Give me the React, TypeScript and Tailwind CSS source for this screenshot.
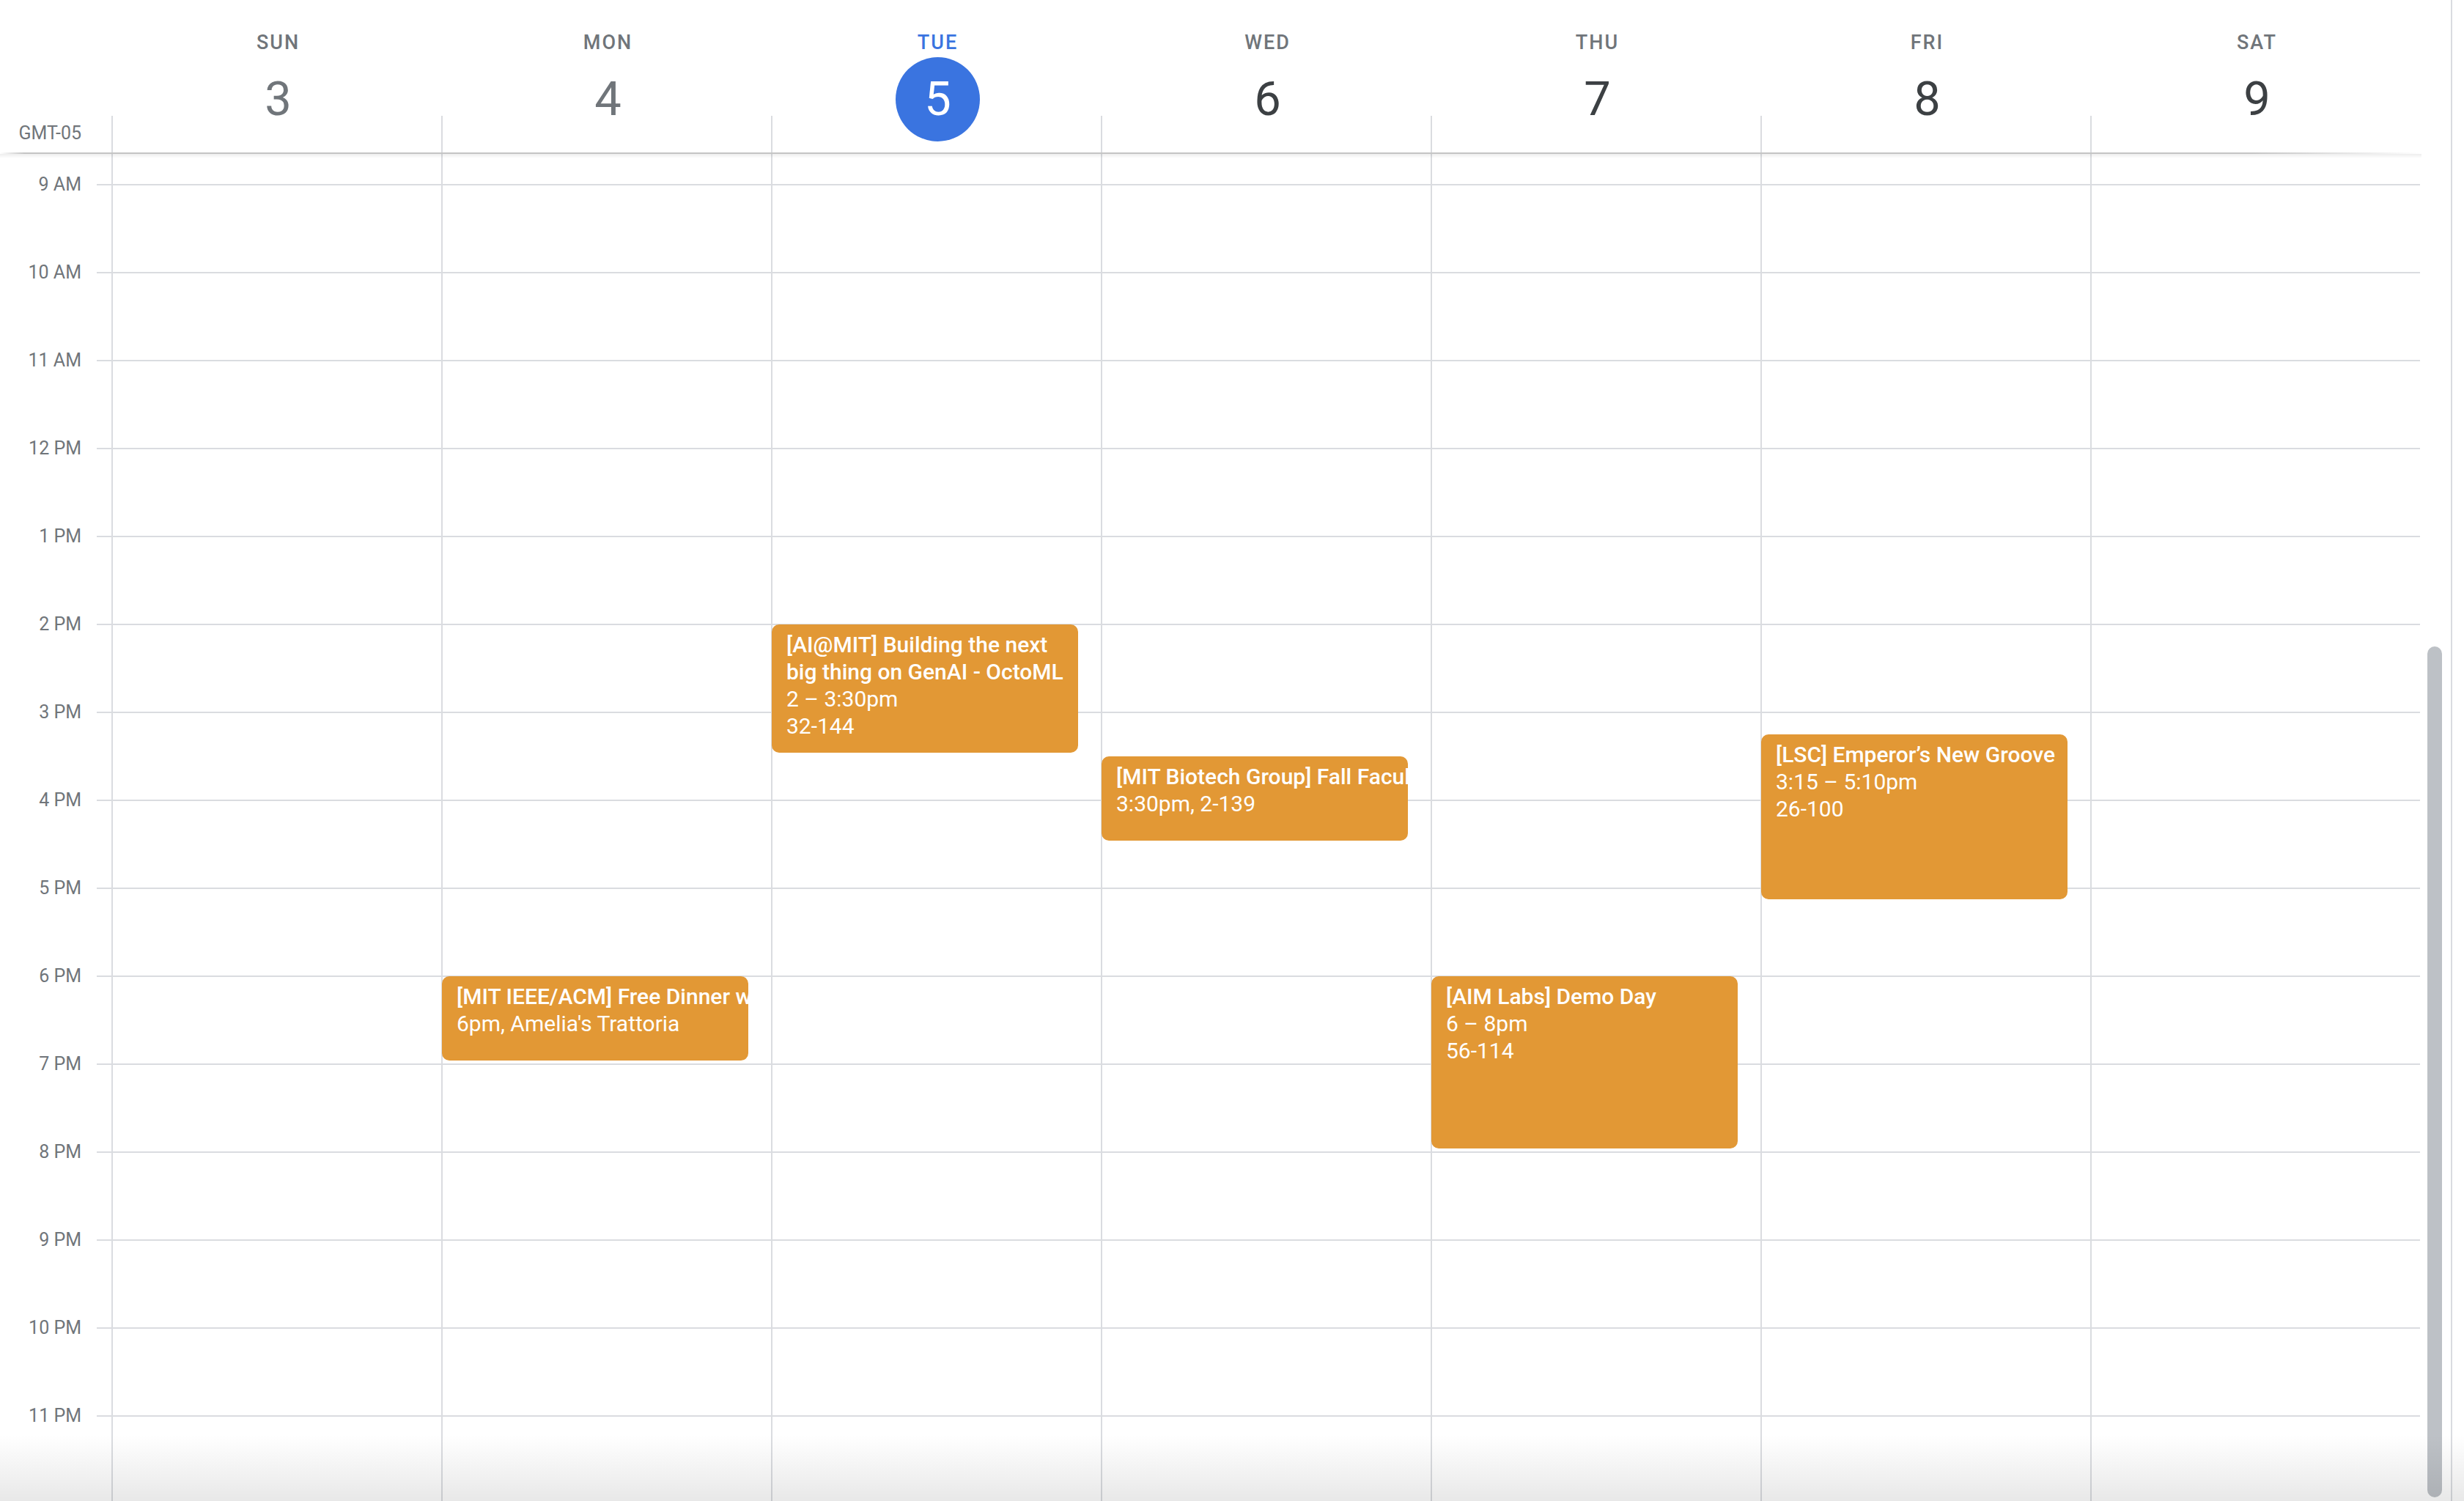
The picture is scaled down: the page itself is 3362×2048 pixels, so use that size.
import React from "react";

type Ev = {
  pos: string;
  title: string;
  lines: string[];
  wrap?: boolean;
};

const days: { name: string; num: string; past?: boolean; today?: boolean; events: Ev[] }[] = [
  { name: "SUN", num: "3", past: true, events: [] },
  {
    name: "MON",
    num: "4",
    past: true,
    events: [
      {
        pos: "top-[1122px] h-[115px]",
        title: "[MIT IEEE/ACM] Free Dinner with Jane Street",
        lines: ["6pm, Amelia's Trattoria"],
      },
    ],
  },
  {
    name: "TUE",
    num: "5",
    today: true,
    events: [
      {
        pos: "top-[642px] h-[175px]",
        title: "[AI@MIT] Building the next big thing on GenAI - OctoML",
        lines: ["2 – 3:30pm", "32-144"],
        wrap: true,
      },
    ],
  },
  {
    name: "WED",
    num: "6",
    events: [
      {
        pos: "top-[822px] h-[115px]",
        title: "[MIT Biotech Group] Fall Faculty Mixer",
        lines: ["3:30pm, 2-139"],
      },
    ],
  },
  {
    name: "THU",
    num: "7",
    events: [
      {
        pos: "top-[1122px] h-[235px]",
        title: "[AIM Labs] Demo Day",
        lines: ["6 – 8pm", "56-114"],
        wrap: true,
      },
    ],
  },
  {
    name: "FRI",
    num: "8",
    events: [
      {
        pos: "top-[792px] h-[225px]",
        title: "[LSC] Emperor’s New Groove",
        lines: ["3:15 – 5:10pm", "26-100"],
        wrap: true,
      },
    ],
  },
  { name: "SAT", num: "9", events: [] },
];

const hours = [
  "9 AM",
  "10 AM",
  "11 AM",
  "12 PM",
  "1 PM",
  "2 PM",
  "3 PM",
  "4 PM",
  "5 PM",
  "6 PM",
  "7 PM",
  "8 PM",
  "9 PM",
  "10 PM",
  "11 PM",
];

function EventBox({ ev }: { ev: Ev }) {
  return (
    <div
      className={`absolute left-[-1px] w-[418px] overflow-hidden rounded-[10px] bg-[#e29835] pl-[20px] pr-[6px] pt-[9px] text-[30px] leading-[37px] text-white ${ev.pos}`}
    >
      <div className={`font-medium ${ev.wrap ? "" : "whitespace-nowrap"}`}>{ev.title}</div>
      {ev.lines.map((l) => (
        <div key={l} className="whitespace-nowrap font-normal">
          {l}
        </div>
      ))}
    </div>
  );
}

export default function App() {
  return (
    <div className="relative flex h-[2048px] w-[3362px] overflow-hidden bg-white font-['Roboto','Liberation_Sans',sans-serif] text-[#3c4043]">
      {/* main calendar area */}
      <div className="flex w-[3344px] shrink-0 flex-col">
        {/* header */}
        <div className="flex h-[208px] w-[3304px] shrink-0">
          <div className="flex w-[152px] shrink-0 items-end justify-end pb-[11px] pr-[41px]">
            <span className="text-[25px] leading-[30px] text-[#70757a]">GMT-05</span>
          </div>
          {days.map((d) => (
            <div key={d.name} className="flex w-[450px] shrink-0 flex-col">
              <div className="flex h-[158px] flex-col items-center pl-[5px] pt-[42px]">
                <span
                  className={`text-[27px] font-medium leading-[32px] tracking-[2px] ${
                    d.today ? "text-[#3a74e0]" : "text-[#70757a]"
                  }`}
                >
                  {d.name}
                </span>
                <div
                  className={`mt-[4px] flex h-[115px] w-[115px] shrink-0 items-center justify-center rounded-full text-[65px] leading-none ${
                    d.today
                      ? "bg-[#3a74e0] text-white"
                      : d.past
                      ? "text-[#70757a]"
                      : "text-[#3c4043]"
                  }`}
                >
                  {d.num}
                </div>
              </div>
              <div className="h-[50px] border-l-2 border-[#dadce0]" />
            </div>
          ))}
        </div>

        {/* header bottom line with shadow */}
        <div className="relative z-10 h-[2px] w-[3304px] shrink-0 bg-[linear-gradient(to_right,rgba(190,190,190,0),#c4c4c4_1%,#c4c4c4_93%,rgba(190,190,190,0))]">
          <div className="absolute left-0 right-0 top-[2px] h-[6px] bg-[linear-gradient(to_bottom,rgba(0,0,0,0.07),rgba(0,0,0,0))]" />
        </div>

        {/* body */}
        <div className="flex flex-1 overflow-hidden">
          {/* time gutter */}
          <div className="flex w-[152px] shrink-0 flex-col">
            <div className="h-[41px] shrink-0" />
            {hours.map((h) => (
              <div key={h} className="flex h-[120px] shrink-0 items-start justify-end">
                <span className="-mt-[14px] text-[25px] leading-[30px] text-[#70757a]">{h}</span>
                <div className="w-[21px] shrink-0" />
                <div className="h-0 w-[20px] shrink-0 border-t-2 border-[#dadce0]" />
              </div>
            ))}
          </div>

          {/* day columns */}
          {days.map((d) => (
            <div
              key={d.name}
              className="relative flex w-[450px] shrink-0 flex-col border-l-2 border-[#dadce0]"
            >
              <div className="h-[41px] shrink-0" />
              {hours.map((h) => (
                <div key={h} className="h-[120px] shrink-0 border-t-2 border-[#dadce0]" />
              ))}
              {d.events.map((ev) => (
                <EventBox key={ev.title} ev={ev} />
              ))}
            </div>
          ))}

          {/* scrollbar track */}
          <div className="relative w-[40px] shrink-0">
            <div className="absolute bottom-[5px] left-[10px] top-[672px] w-[20px] rounded-full bg-[#bdc1c6]" />
          </div>
        </div>
      </div>

      {/* right divider */}
      <div className="w-[2px] shrink-0 bg-[#dadce0]" />
      <div className="flex-1" />

      {/* bottom window fade */}
      <div className="pointer-events-none absolute bottom-0 left-0 right-0 h-[90px] bg-[linear-gradient(to_bottom,rgba(0,0,0,0),rgba(0,0,0,0.09))]" />
    </div>
  );
}
